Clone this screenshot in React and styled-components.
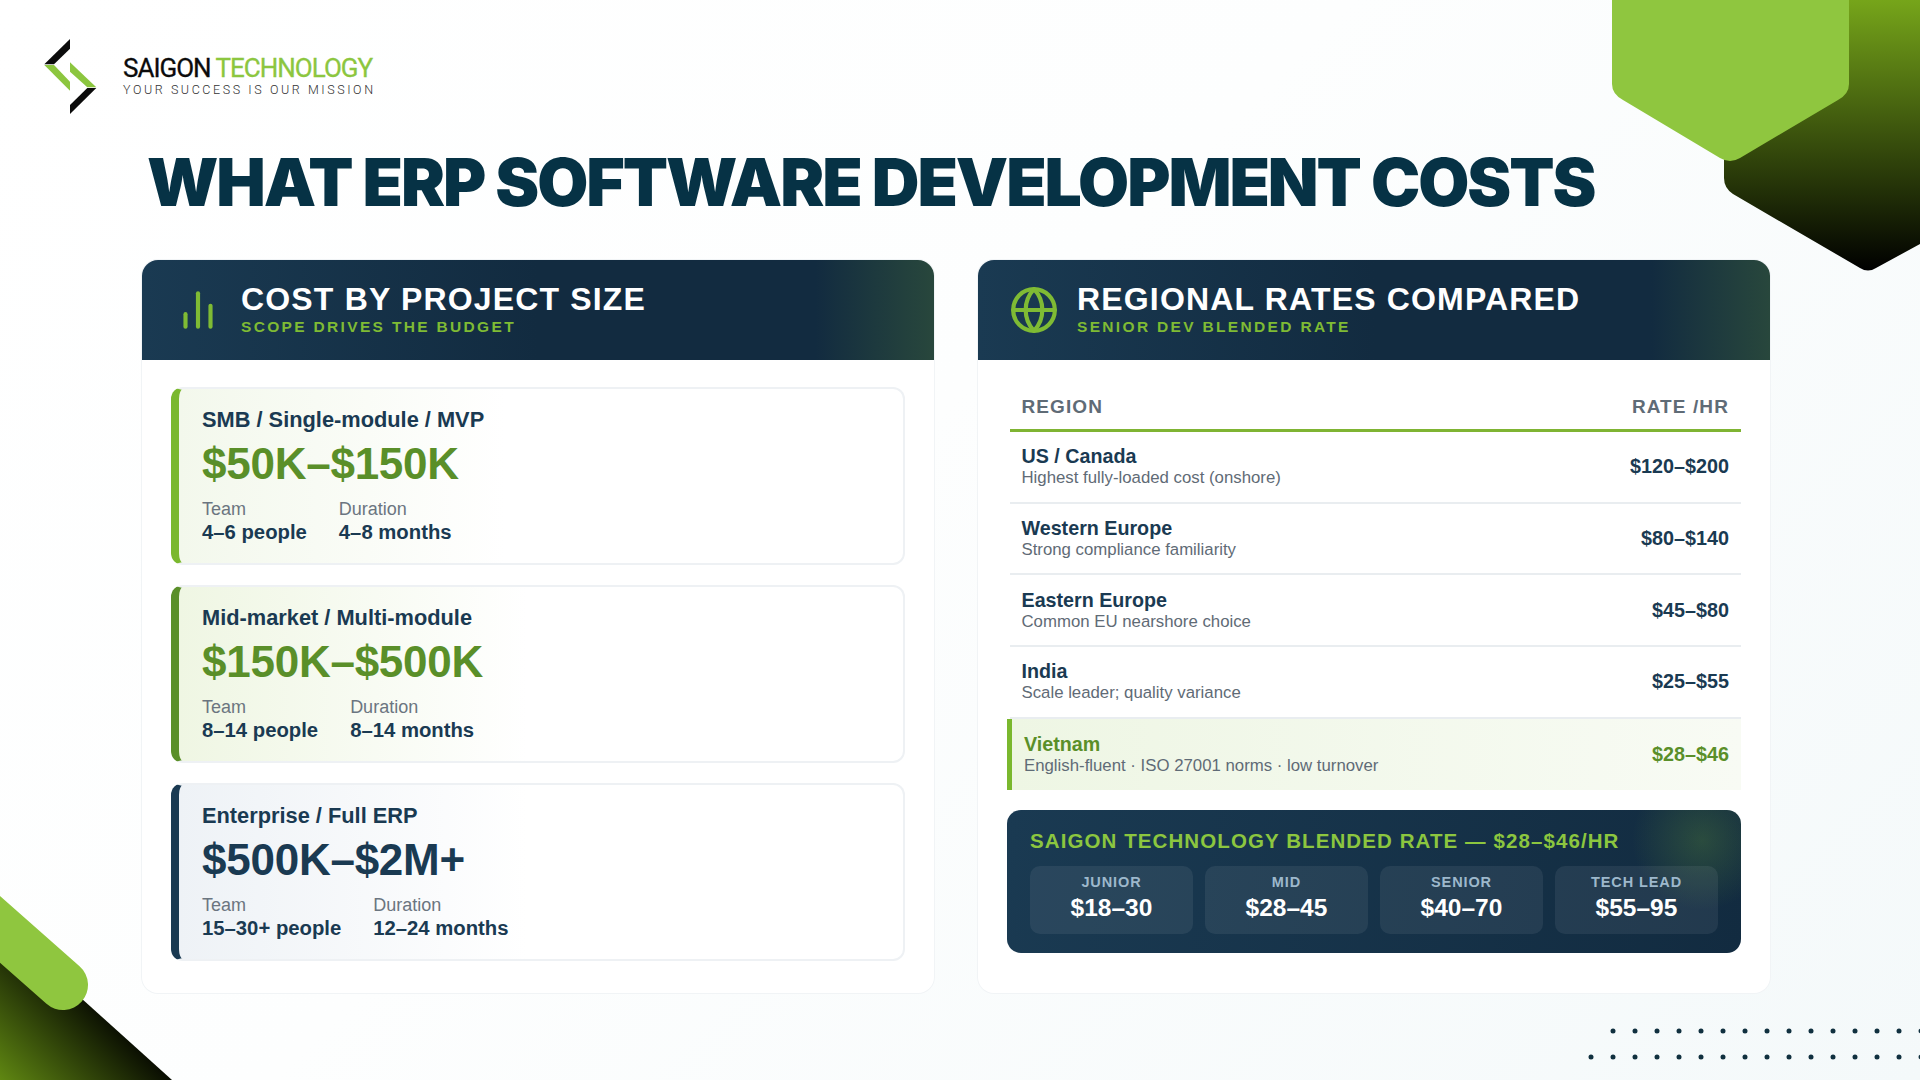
import React from "react";
import styled, { createGlobalStyle } from "styled-components";
import { Globe } from "lucide-react";

const GlobalStyle = createGlobalStyle`
  html, body {
    margin: 0;
    padding: 0;
    background: #fff;
  }
  * {
    box-sizing: border-box;
  }
`;

const Page = styled.div`
  position: relative;
  width: 1920px;
  height: 1080px;
  overflow: hidden;
  padding-top: 39px;
  font-family: "Liberation Sans", Arial, sans-serif;
  color: #1a3a52;
  background: linear-gradient(135deg, #ffffff 0%, #fdfefe 45%, #f4f9fa 100%);
`;

const Decor = styled.svg`
  position: absolute;
  left: 0;
  top: 0;
  width: 1920px;
  height: 1080px;
  pointer-events: none;
`;

const Brand = styled.div`
  position: relative;
  display: flex;
  align-items: center;
  gap: 25px;
  height: 75px;
  margin-left: 44px;
`;

const BrandText = styled.div`
  display: flex;
  flex-direction: column;
  font-family: Roboto, "Liberation Sans", sans-serif;
  margin-top: -2px;
`;

const BrandName = styled.div`
  font-size: 26px;
  line-height: 28px;
  font-weight: 400;
  letter-spacing: -1px;
  color: #0b0b0b;
  -webkit-text-stroke: 0.3px #0b0b0b;

  span {
    color: #8cc63f;
    -webkit-text-stroke: 0.3px #8cc63f;
  }
`;

const BrandTag = styled.div`
  font-size: 12.5px;
  line-height: 15px;
  font-weight: 300;
  letter-spacing: 2.58px;
  color: #333;
`;

const Title = styled.h1`
  position: relative;
  margin: 28px 0 0 147px;
  font-family: Inter, "Liberation Sans", sans-serif;
  font-size: 66px;
  line-height: 80px;
  font-weight: 900;
  letter-spacing: -2.05px;
  color: #063245;
  white-space: nowrap;
`;

const Panels = styled.div`
  position: relative;
  display: grid;
  grid-template-columns: 792px 792px;
  gap: 44px;
  margin: 38px 0 0 142px;
`;

const Panel = styled.section`
  height: 733px;
  border-radius: 16px;
  background: #fff;
  box-shadow: 0 0 0 1px #f1f4f6;
  overflow: hidden;
`;

const PanelHead = styled.header`
  display: flex;
  align-items: center;
  gap: 18px;
  height: 100px;
  padding-left: 31px;
  background: linear-gradient(90deg, #1a3a52 0%, #122b40 50%, #122b40 85%, #28473c 100%);
`;

const BarsIcon = styled.svg`
  width: 50px;
  height: 50px;
  fill: none;
  stroke: #7fbb34;
  stroke-width: 2;
  stroke-linecap: round;
`;

const GlobeIcon = styled(Globe)`
  flex: none;
  color: #7fbb34;
`;

const HeadText = styled.div`
  display: flex;
  flex-direction: column;
  padding-bottom: 4px;
`;

const HeadTitle = styled.h2`
  margin: 0;
  font-size: 32px;
  line-height: 36px;
  font-weight: 700;
  letter-spacing: 1.17px;
  color: #fff;
`;

const HeadSub = styled.div`
  margin-top: 1px;
  font-size: 15.5px;
  line-height: 18px;
  font-weight: 700;
  letter-spacing: 2.33px;
  color: #7fbb34;
`;

const CardList = styled.div`
  display: flex;
  flex-direction: column;
  gap: 20px;
  padding: 27px 29px 0;
`;

const Card = styled.article`
  height: 178px;
  padding: 18px 0 0 23px;
  border: 2px solid #eef1f4;
  border-left: 8px solid ${(p) => p.$accent};
  border-radius: 12px;
  background: linear-gradient(90deg, ${(p) => p.$tint} 0%, #ffffff ${(p) => p.$fade});
`;

const CardName = styled.div`
  font-size: 21.8px;
  line-height: 26px;
  font-weight: 700;
  color: #1a3a52;
`;

const CardPrice = styled.div`
  margin-top: 4px;
  font-size: 44px;
  line-height: 54px;
  font-weight: 700;
  letter-spacing: -0.25px;
  color: ${(p) => p.$color};
`;

const Facts = styled.div`
  display: flex;
  gap: 32px;
  margin-top: 7px;
`;

const FactLabel = styled.div`
  font-size: 18px;
  line-height: 22px;
  color: #6b7580;
`;

const FactValue = styled.div`
  font-size: 20.3px;
  line-height: 25px;
  font-weight: 700;
  color: #1a3a52;
`;

const RatesBody = styled.div`
  padding: 27px 29px 0;
`;

const TableHead = styled.div`
  display: flex;
  justify-content: space-between;
  align-items: center;
  height: 45px;
  margin-left: 2.5px;
  padding: 0 12px 2px;
  border-bottom: 3px solid #7fb433;
  font-size: 19px;
  font-weight: 700;
  letter-spacing: 1.1px;
  color: #5f6b76;
`;

const Row = styled.div`
  display: flex;
  justify-content: space-between;
  align-items: center;
  height: 71.7px;
  margin-left: 2.5px;
  padding: 0 12px;
  border-bottom: 2px solid #e9edf0;
`;

const FeaturedRow = styled(Row)`
  height: 71px;
  margin-left: 0;
  border-bottom: 0;
  border-left: 5px solid #7ab82e;
  background: linear-gradient(90deg, #eef6e4 0%, #f8fbf4 100%);
`;

const RegionName = styled.div`
  font-size: 19.7px;
  line-height: 23px;
  font-weight: 700;
  color: ${(p) => p.$color || "#1a3a52"};
`;

const RegionNote = styled.div`
  font-size: 16.8px;
  line-height: 20px;
  color: #5f6b76;
`;

const Rate = styled.div`
  font-size: 19.8px;
  font-weight: 700;
  color: ${(p) => p.$color || "#1a3a52"};
`;

const BlendBox = styled.div`
  height: 143px;
  margin-top: 20px;
  padding: 17px 23px 0;
  border-radius: 14px;
  background:
    radial-gradient(circle 70px at 695px 30px, rgba(127, 187, 52, 0.22), rgba(127, 187, 52, 0) 100%),
    linear-gradient(100deg, #1a3a52 0%, #122b40 100%);
`;

const BlendTitle = styled.div`
  font-size: 20.5px;
  line-height: 28px;
  font-weight: 700;
  letter-spacing: 1.09px;
  color: #8cc63f;
`;

const Tiers = styled.div`
  display: grid;
  grid-template-columns: repeat(4, 1fr);
  gap: 12px;
  margin-top: 11px;
`;

const Tier = styled.div`
  height: 68px;
  padding-top: 7px;
  border-radius: 10px;
  text-align: center;
  background: rgba(255, 255, 255, 0.07);
`;

const TierLabel = styled.div`
  font-size: 14.5px;
  line-height: 18px;
  font-weight: 700;
  letter-spacing: 0.9px;
  color: #9db8cc;
`;

const TierValue = styled.div`
  margin-top: 2px;
  font-size: 24.5px;
  line-height: 30px;
  font-weight: 700;
  color: #fff;
`;

const sizes = [
  {
    name: "SMB / Single-module / MVP",
    price: "$50K–$150K",
    team: "4–6 people",
    duration: "4–8 months",
    accent: "#7ab82e",
    priceColor: "#5a8f29",
    tint: "#f3f8ec",
    fade: "45%",
  },
  {
    name: "Mid-market / Multi-module",
    price: "$150K–$500K",
    team: "8–14 people",
    duration: "8–14 months",
    accent: "#5a8f29",
    priceColor: "#5a8f29",
    tint: "#eff6e3",
    fade: "48%",
  },
  {
    name: "Enterprise / Full ERP",
    price: "$500K–$2M+",
    team: "15–30+ people",
    duration: "12–24 months",
    accent: "#1a3a52",
    priceColor: "#1a3a52",
    tint: "#eef2f6",
    fade: "48%",
  },
];

const regions = [
  { name: "US / Canada", note: "Highest fully-loaded cost (onshore)", rate: "$120–$200" },
  { name: "Western Europe", note: "Strong compliance familiarity", rate: "$80–$140" },
  { name: "Eastern Europe", note: "Common EU nearshore choice", rate: "$45–$80" },
  { name: "India", note: "Scale leader; quality variance", rate: "$25–$55" },
];

const tiers = [
  { label: "JUNIOR", value: "$18–30" },
  { label: "MID", value: "$28–45" },
  { label: "SENIOR", value: "$40–70" },
  { label: "TECH LEAD", value: "$55–95" },
];

const Shapes = () => {
  const dots = [];
  for (let x = 1613; x < 1925; x += 22) dots.push([x, 1031]);
  for (let x = 1591; x < 1925; x += 22) dots.push([x, 1057]);

  return (
    <Decor viewBox="0 0 1920 1080">
      <defs>
        <linearGradient id="hexFade" x1="0" y1="0" x2="0" y2="270" gradientUnits="userSpaceOnUse">
          <stop offset="0" stopColor="#76a51a" />
          <stop offset="1" stopColor="#000" />
        </linearGradient>
        <linearGradient id="cornerFade" x1="0" y1="1080" x2="95" y2="985" gradientUnits="userSpaceOnUse">
          <stop offset="0" stopColor="#5f8712" />
          <stop offset="1" stopColor="#000" />
        </linearGradient>
      </defs>
      <path
        d="M1849 0H1920V244L1876 268Q1868 273 1860 268L1733 194Q1724 188 1724 178V120Z"
        fill="url(#hexFade)"
      />
      <path
        d="M1612 0V84Q1612 94 1623 100L1720 158Q1730 164 1740 158L1838 100Q1849 94 1849 84V0Z"
        fill="#8fc63f"
      />
      <path d="M0 925L172 1080H0Z" fill="url(#cornerFade)" />
      <line x1="-30" y1="903" x2="63" y2="985" stroke="#8fc63f" strokeWidth="50" strokeLinecap="round" />
      {dots.map(([x, y]) => (
        <circle key={`${x}-${y}`} cx={x} cy={y} r="2.5" fill="#10303f" />
      ))}
    </Decor>
  );
};

const LogoMark = () => (
  <svg width="54" height="75" viewBox="44 39 54 75">
    <path d="M70 39L44.3 64.3H54L70 48.7Z" fill="#0b0b0b" />
    <path d="M44.3 65L70 90.7V81.7L54 65Z" fill="#8cc63f" />
    <path d="M70 62.3L96.3 87.3H87.3L70 71.7Z" fill="#8cc63f" />
    <path d="M96.3 88L70 114V105L87.3 88Z" fill="#0b0b0b" />
  </svg>
);

const App = () => (
  <Page>
    <GlobalStyle />
    <Shapes />
    <Brand>
      <LogoMark />
      <BrandText>
        <BrandName>
          SAIGON <span>TECHNOLOGY</span>
        </BrandName>
        <BrandTag>YOUR SUCCESS IS OUR MISSION</BrandTag>
      </BrandText>
    </Brand>
    <Title>WHAT ERP SOFTWARE DEVELOPMENT COSTS</Title>
    <Panels>
      <Panel>
        <PanelHead>
          <BarsIcon viewBox="0 0 24 24">
            <line x1="18" y1="20" x2="18" y2="10" />
            <line x1="12" y1="20" x2="12" y2="4" />
            <line x1="6" y1="20" x2="6" y2="14" />
          </BarsIcon>
          <HeadText>
            <HeadTitle>COST BY PROJECT SIZE</HeadTitle>
            <HeadSub>SCOPE DRIVES THE BUDGET</HeadSub>
          </HeadText>
        </PanelHead>
        <CardList>
          {sizes.map((size) => (
            <Card key={size.name} $accent={size.accent} $tint={size.tint} $fade={size.fade}>
              <CardName>{size.name}</CardName>
              <CardPrice $color={size.priceColor}>{size.price}</CardPrice>
              <Facts>
                <div>
                  <FactLabel>Team</FactLabel>
                  <FactValue>{size.team}</FactValue>
                </div>
                <div>
                  <FactLabel>Duration</FactLabel>
                  <FactValue>{size.duration}</FactValue>
                </div>
              </Facts>
            </Card>
          ))}
        </CardList>
      </Panel>
      <Panel>
        <PanelHead>
          <GlobeIcon size={50} strokeWidth={2} />
          <HeadText>
            <HeadTitle>REGIONAL RATES COMPARED</HeadTitle>
            <HeadSub>SENIOR DEV BLENDED RATE</HeadSub>
          </HeadText>
        </PanelHead>
        <RatesBody>
          <TableHead>
            <span>REGION</span>
            <span>RATE /HR</span>
          </TableHead>
          {regions.map((region) => (
            <Row key={region.name}>
              <div>
                <RegionName>{region.name}</RegionName>
                <RegionNote>{region.note}</RegionNote>
              </div>
              <Rate>{region.rate}</Rate>
            </Row>
          ))}
          <FeaturedRow>
            <div>
              <RegionName $color="#5a8f29">Vietnam</RegionName>
              <RegionNote>English-fluent · ISO 27001 norms · low turnover</RegionNote>
            </div>
            <Rate $color="#5a8f29">$28–$46</Rate>
          </FeaturedRow>
          <BlendBox>
            <BlendTitle>SAIGON TECHNOLOGY BLENDED RATE — $28–$46/HR</BlendTitle>
            <Tiers>
              {tiers.map((tier) => (
                <Tier key={tier.label}>
                  <TierLabel>{tier.label}</TierLabel>
                  <TierValue>{tier.value}</TierValue>
                </Tier>
              ))}
            </Tiers>
          </BlendBox>
        </RatesBody>
      </Panel>
    </Panels>
  </Page>
);

export default App;
